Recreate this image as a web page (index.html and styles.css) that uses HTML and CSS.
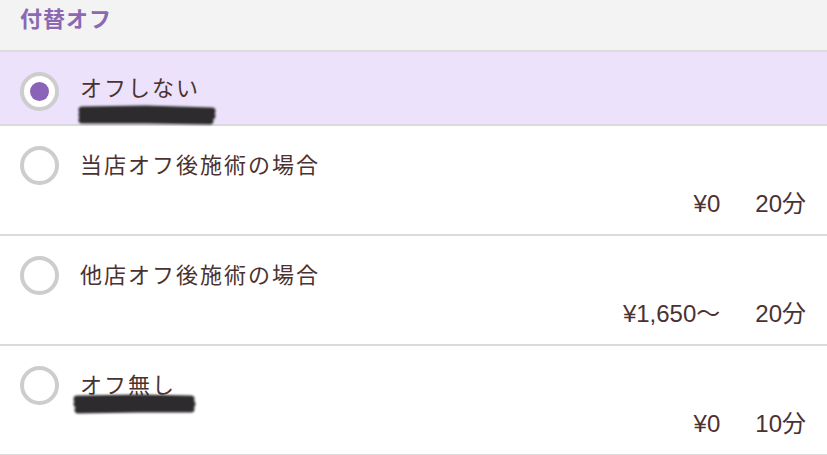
FILE: index.html
```html
<!DOCTYPE html>
<html lang="ja">
<head>
    <meta charset="UTF-8">
    <meta name="viewport" content="width=device-width, initial-scale=1.0">
    <title>付替オフ</title>
    <link rel="stylesheet" href="styles.css">
</head>
<body>

    <!-- 見出し -->
    <div class="section-head">付替オフ</div>

    <!-- 選択肢 -->
    <div class="option is-selected">
        <span class="radio"></span>
        <div class="option-body">
            <div class="label redacted">オフしない
                <svg class="scribble scribble-1" width="140" height="24" viewBox="0 0 140 24">
                    <path d="M6 8 L70 7 L136 9 M6 13 L70 12 L136 14 M6 18 L70 18 L134 19" />
                </svg>
            </div>
        </div>
    </div>

    <div class="option">
        <span class="radio"></span>
        <div class="option-body">
            <div class="label">当店オフ後施術の場合</div>
            <div class="meta">
                <span class="price">¥0</span>
                <span class="time">20分</span>
            </div>
        </div>
    </div>

    <div class="option">
        <span class="radio"></span>
        <div class="option-body">
            <div class="label">他店オフ後施術の場合</div>
            <div class="meta">
                <span class="price">¥1,650〜</span>
                <span class="time">20分</span>
            </div>
        </div>
    </div>

    <div class="option">
        <span class="radio"></span>
        <div class="option-body">
            <div class="label redacted">オフ無し
                <svg class="scribble scribble-2" width="130" height="24" viewBox="0 0 130 24">
                    <path d="M6 6 L68 5 L120 6 M6 11 L68 10 L121 11 M7 17 L68 16 L120 16" />
                </svg>
            </div>
            <div class="meta">
                <span class="price">¥0</span>
                <span class="time">10分</span>
            </div>
        </div>
    </div>

</body>
</html>
```

FILE: styles.css
```css
/* 全体 */
body {
    margin: 0;
    width: 827px;
    background: #fff;
    font-family: "Liberation Sans", "Noto Sans CJK JP", sans-serif;
    color: #4b3230;
}

/* 見出し */
.section-head {
    height: 52px;
    box-sizing: border-box;
    padding: 5px 20px 0;
    background: #f3f3f3;
    border-bottom: 2px solid #dcdcdc;
    color: #8a68b2;
    font-size: 22px;
    font-weight: bold;
    letter-spacing: 1px;
    line-height: 30px;
}

/* 選択肢の行 */
.option {
    display: flex;
    align-items: flex-start;
    gap: 21px;
    padding: 24px 21px 14px 20px;
    border-bottom: 2px solid #dadada;
}

.option.is-selected {
    background: #ece2fb;
    padding-top: 21px;
    padding-bottom: 13px;
}

.radio {
    flex: none;
    width: 39px;
    height: 39px;
    box-sizing: border-box;
    margin-top: -4px;
    border: 4px solid #cdcdcd;
    border-radius: 50%;
    background: #fff;
    position: relative;
}

.is-selected .radio {
    margin-top: -1px;
}

.is-selected .radio::after {
    content: "";
    position: absolute;
    left: 6px;
    top: 6px;
    width: 19px;
    height: 19px;
    border-radius: 50%;
    background: #8a62b7;
}

.option-body {
    flex: 1;
}

.label {
    font-size: 22px;
    letter-spacing: 2px;
    line-height: 32px;
}

.redacted {
    position: relative;
}

/* 塗りつぶし */
.scribble {
    position: absolute;
    filter: blur(0.8px);
}

.scribble path {
    fill: none;
    stroke: #2d2b2d;
    stroke-width: 7;
    stroke-linecap: round;
    stroke-linejoin: round;
}

.scribble-1 {
    left: -4px;
    top: 29px;
}

.scribble-2 {
    left: -9px;
    top: 23px;
}

/* 料金・時間 */
.meta {
    display: flex;
    justify-content: flex-end;
    gap: 35px;
    margin-top: 6px;
    font-size: 24px;
    line-height: 32px;
}
```
